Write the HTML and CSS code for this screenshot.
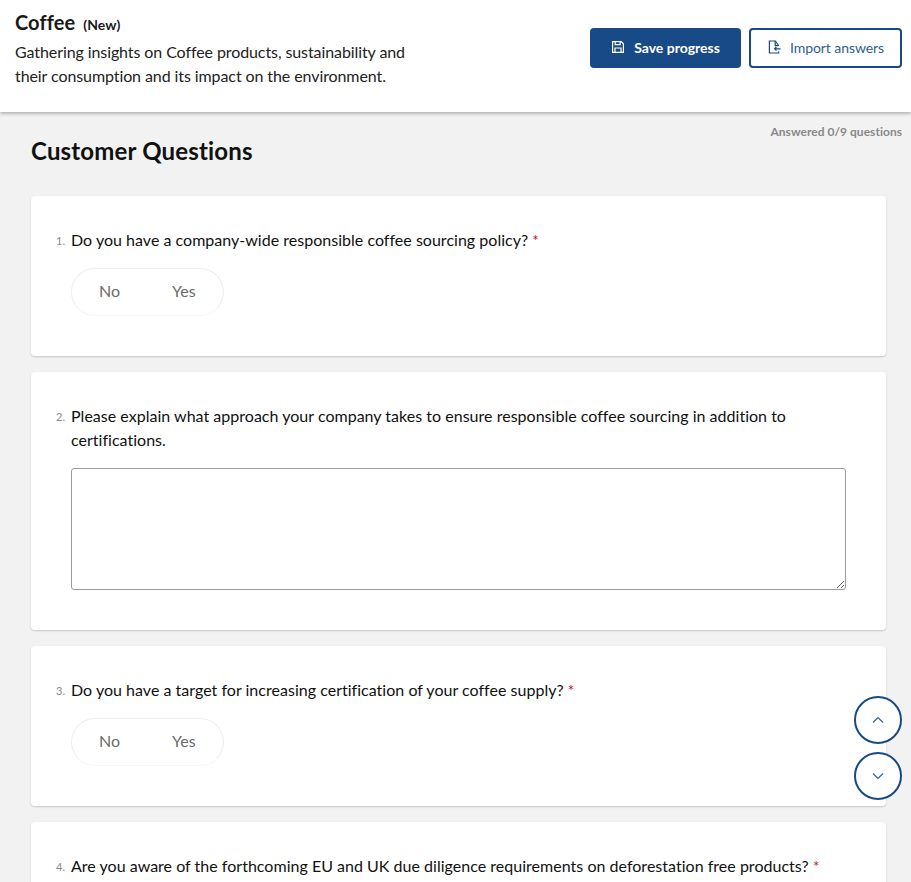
FILE: index.html
```html
<!DOCTYPE html>
<html lang="en">
<head>
<meta charset="utf-8">
<title>Coffee</title>
<link rel="stylesheet" href="styles.css">
</head>
<body>
<header class="topbar">
  <div class="intro">
    <h1 class="title">Coffee <small class="tag">(New)</small></h1>
    <p class="desc">Gathering insights on Coffee products, sustainability and their consumption and its impact on the environment.</p>
  </div>
  <div class="actions">
    <button class="btn btn-primary" type="button">
      <svg class="btn-icon" viewBox="0 0 14 14" fill="none" stroke="currentColor" stroke-width="1.2"><path d="M1.6 1.6h8.6l2.2 2.2v8.6H1.6z"/><path d="M4.2 1.6v3h5v-3"/><path d="M4 12.4V8h6v4.4"/></svg>
      Save progress
    </button>
    <button class="btn btn-outline" type="button">
      <svg class="btn-icon" viewBox="0 0 14 14" fill="none" stroke="#174a86" stroke-width="1.2"><path d="M11.6 5.5 8.4 1H2.4v12h9.2v-1.5"/><path d="M8.2 1v4.6h3.4"/><path d="M13.6 8.8H7.6M9.4 7 7.6 8.8l1.8 1.8"/></svg>
      Import answers
    </button>
  </div>
</header>
<main class="content">
  <p class="progress">Answered 0/9 questions</p>
  <h2 class="heading">Customer Questions</h2>
  <section class="card">
    <div class="question"><span class="num">1.</span><span class="qtext">Do you have a company-wide responsible coffee sourcing policy? <span class="req">*</span></span></div>
    <div class="toggle"><span class="opt">No</span><span class="opt">Yes</span></div>
  </section>
  <section class="card">
    <div class="question"><span class="num">2.</span><span class="qtext">Please explain what approach your company takes to ensure responsible coffee sourcing in addition to certifications.</span></div>
    <textarea class="answer"></textarea>
  </section>
  <section class="card">
    <div class="question"><span class="num">3.</span><span class="qtext">Do you have a target for increasing certification of your coffee supply? <span class="req">*</span></span></div>
    <div class="toggle"><span class="opt">No</span><span class="opt">Yes</span></div>
  </section>
  <section class="card">
    <div class="question"><span class="num">4.</span><span class="qtext">Are you aware of the forthcoming EU and UK due diligence requirements on deforestation free products? <span class="req">*</span></span></div>
  </section>
</main>
<div class="scroller">
  <button class="round" type="button" aria-label="Previous"><svg viewBox="0 0 14 8" class="chev" fill="none" stroke="currentColor" stroke-width="1.1"><path d="M2 6.5 7 1.5l5 5"/></svg></button>
  <button class="round" type="button" aria-label="Next"><svg viewBox="0 0 14 8" class="chev" fill="none" stroke="currentColor" stroke-width="1.1"><path d="M2 1.5l5 5 5-5"/></svg></button>
</div>
</body>
</html>
```
FILE: styles.css
```css
* { box-sizing: border-box; }
html, body { height: 100%; }
body { margin: 0; overflow: hidden; background: #f2f2f2; color: #111; font-family: Lato, "Liberation Sans", sans-serif; font-size: 16px; font-variant-ligatures: none; }
.topbar { height: 112px; background: #fff; display: flex; justify-content: space-between; padding: 10px 9px 0 15px; box-shadow: 0 2px 3px rgba(0,0,0,.25); position: relative; }
.intro { width: 410px; }
.title { margin: 0; font-size: 20px; line-height: 24px; font-weight: 700; color: #1a1a1a; letter-spacing: .1px; }
.tag { font-size: 14px; margin-left: 3px; }
.desc { margin: 3px 0 0; line-height: 24px; color: #222; letter-spacing: -.09px; }
.actions { display: flex; gap: 8px; padding-top: 18px; align-items: flex-start; }
.btn { height: 40px; border-radius: 4px; display: flex; align-items: center; justify-content: center; gap: 9px; font: inherit; font-size: 14px; padding: 0 0 2px; }
.btn-icon { width: 14px; height: 14px; }
.btn-primary { width: 151px; background: #174a86; border: 0; color: #fff; font-weight: 700; }
.btn-outline { width: 153px; background: #fff; border: 2px solid #174a86; color: #2f5d94; letter-spacing: -.08px; }
.content { padding: 0 9px 0 31px; position: relative; }
.progress { margin: 0; padding-top: 13px; text-align: right; font-size: 12px; line-height: 14px; font-weight: 700; color: #888; letter-spacing: .03px; }
.heading { margin: 0 0 33px; font-size: 24px; line-height: 24px; font-weight: 700; color: #111; letter-spacing: .17px; }
.card { width: 855px; background: #fff; border-radius: 4px; box-shadow: 0 1px 2px rgba(0,0,0,.18); padding: 32px 40px 40px 24px; margin-bottom: 16px; }
.question { display: flex; line-height: 24px; }
.num { width: 16px; height: 24px; flex: none; font-size: 11px; color: #888; padding: 1px 0 0 1px; }
.qtext { flex: 1; letter-spacing: .02px; }
.req { color: #d0021b; font-size: 15px; line-height: 0; }
.toggle { margin: 16px 0 0 16px; width: 153px; height: 48px; border: 1px solid #eee; border-bottom-color: #f7f7f7; border-radius: 24px; display: flex; align-items: center; padding: 0 0 3px 27px; gap: 52px; color: #6b6b6b; }
.answer { display: block; margin: 16px 0 0 16px; width: 775px; height: 122px; border: 1px solid #9a9aa2; border-radius: 3px; background: #fff; }
.scroller { position: absolute; right: 9px; top: 696px; display: flex; flex-direction: column; gap: 8px; }
.round { width: 48px; height: 48px; border-radius: 50%; background: #fff; border: 2px solid #174a86; color: #2f5d94; display: flex; align-items: center; justify-content: center; padding: 0; }
.chev { width: 14px; height: 8px; }
```
